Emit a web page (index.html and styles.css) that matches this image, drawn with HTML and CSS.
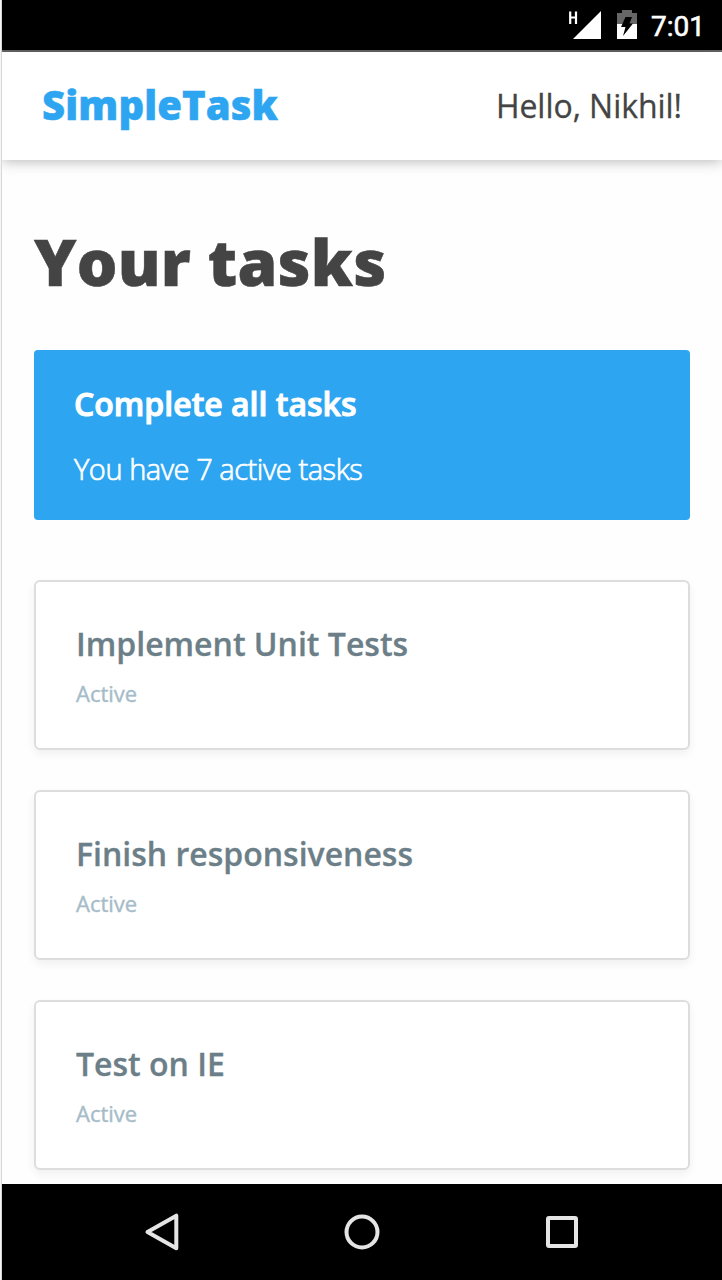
FILE: index.html
```html
<!DOCTYPE html>
<html lang="en">
<head>
<meta charset="utf-8">
<title>SimpleTask</title>
<link rel="stylesheet" href="styles.css">
</head>
<body>
<div class="screen">
  <div class="status-bar">
    <svg class="signal" width="34" height="30" viewBox="0 0 34 30"><path d="M33 1v28H5z" fill="#fff"/><path d="M2.200 1.500V14M8 1.500V14M2.200 7.500H8" fill="none" stroke="#fff" stroke-width="2.200"/></svg>
    <svg class="battery" width="20" height="30" viewBox="0 0 20 30"><path d="M0 3h5V0h10v3h5v11H0z" fill="#666"/><path d="M0 14h20v15H0z" fill="#fff"/><path d="M8.500 7H15l-2.500 6.500H16L6 26l2.500-9H4z" fill="#000"/></svg>
    <span class="clock">7:01</span>
  </div>
  <header class="header">
    <div class="logo">SimpleTask</div>
    <div class="greeting">Hello, Nikhil!</div>
  </header>
  <main class="content">
    <h1 class="title">Your tasks</h1>
    <section class="banner">
      <h2 class="banner-title">Complete all tasks</h2>
      <p class="banner-text">You have 7 active tasks</p>
    </section>
    <div class="tasks">
      <article class="card"><h3 class="card-title">Implement Unit Tests</h3><p class="card-status">Active</p></article>
      <article class="card"><h3 class="card-title">Finish responsiveness</h3><p class="card-status">Active</p></article>
      <article class="card"><h3 class="card-title">Test on IE</h3><p class="card-status">Active</p></article>
    </div>
  </main>
  <nav class="nav-bar">
    <svg width="40" height="40" viewBox="0 0 40 40"><path d="M34.300 3.700v32.600L5.500 20z"/></svg>
    <svg width="40" height="40" viewBox="0 0 40 40"><circle cx="20" cy="20" r="15.500"/></svg>
    <svg width="40" height="40" viewBox="0 0 40 40"><rect x="6" y="6" width="28" height="28" rx="1"/></svg>
  </nav>
</div>
</body>
</html>
```
FILE: styles.css
```css
* { box-sizing: border-box; }
body {
  margin: 0;
  padding-left: 1px;
  background: #f5f5f5;
  font-family: "Open Sans", sans-serif;
  color: #444;
}
h1, h2, h3, p { margin: 0; }
.screen {
  display: flex;
  flex-direction: column;
  height: 1280px;
  border-left: 1px solid #d8d8d8;
  background: #fefefe;
  overflow: hidden;
}
.status-bar {
  display: flex;
  flex: none;
  align-items: flex-start;
  height: 52px;
  padding: 10px 17px 0 0;
  justify-content: flex-end;
  background: #000;
  border-bottom: 2px solid #666;
}
.battery { margin-left: 15px; }
.clock {
  width: 54px;
  margin-left: 14px;
  padding-top: 1px;
  font: 400 28px/32px Roboto, sans-serif;
  -webkit-text-stroke: .6px;
  color: #fff;
}
.header {
  display: flex;
  flex: none;
  align-items: center;
  justify-content: space-between;
  height: 108px;
  padding: 0 40px;
  background: #fff;
  box-shadow: 0 2px 12px rgba(0, 0, 0, .26);
  z-index: 1;
}
.logo {
  padding-bottom: 3px;
  font-size: 40px;
  line-height: 54px;
  font-weight: 800;
  letter-spacing: .1px;
  -webkit-text-stroke: .5px;
  color: #2ea5f0;
}
.greeting { font-size: 32px; line-height: 44px; letter-spacing: -.05px; -webkit-text-stroke: .3px; }
.content {
  flex: 1;
  min-height: 0;
  padding: 58px 32px 0;
}
.title {
  margin-bottom: 44px;
  font-size: 64px;
  line-height: 88px;
  font-weight: 800;
  letter-spacing: .2px;
  -webkit-text-stroke: .5px;
}
.banner {
  height: 170px;
  padding: 32px 40px;
  border-radius: 4px;
  background: #2ea5f0;
  color: #fff;
}
.banner-title { font-size: 32px; line-height: 44px; font-weight: 600; -webkit-text-stroke: 1px; }
.banner-text { margin-top: 23px; font-size: 29px; line-height: 40px; font-weight: 300; letter-spacing: -.45px; -webkit-text-stroke: .7px; }
.tasks {
  display: flex;
  flex-direction: column;
  gap: 40px;
  margin-top: 60px;
}
.card {
  height: 170px;
  padding: 40px;
  border: 2px solid #ddd;
  border-radius: 6px;
  background: #fff;
  box-shadow: 0 4px 10px rgba(0, 0, 0, .06);
}
.card-title { font-size: 32px; line-height: 44px; font-weight: 600; color: #6c7f88; -webkit-text-stroke: .3px; }
.card-status { margin-top: 12px; font-size: 22px; line-height: 30px; color: #a6bcc8; -webkit-text-stroke: .4px; }
.nav-bar {
  display: flex;
  flex: none;
  justify-content: center;
  align-items: center;
  gap: 160px;
  height: 96px;
  background: #000;
  z-index: 1;
}
.nav-bar svg { fill: none; stroke: #e5e5e5; stroke-width: 4; stroke-linejoin: round; }
```
